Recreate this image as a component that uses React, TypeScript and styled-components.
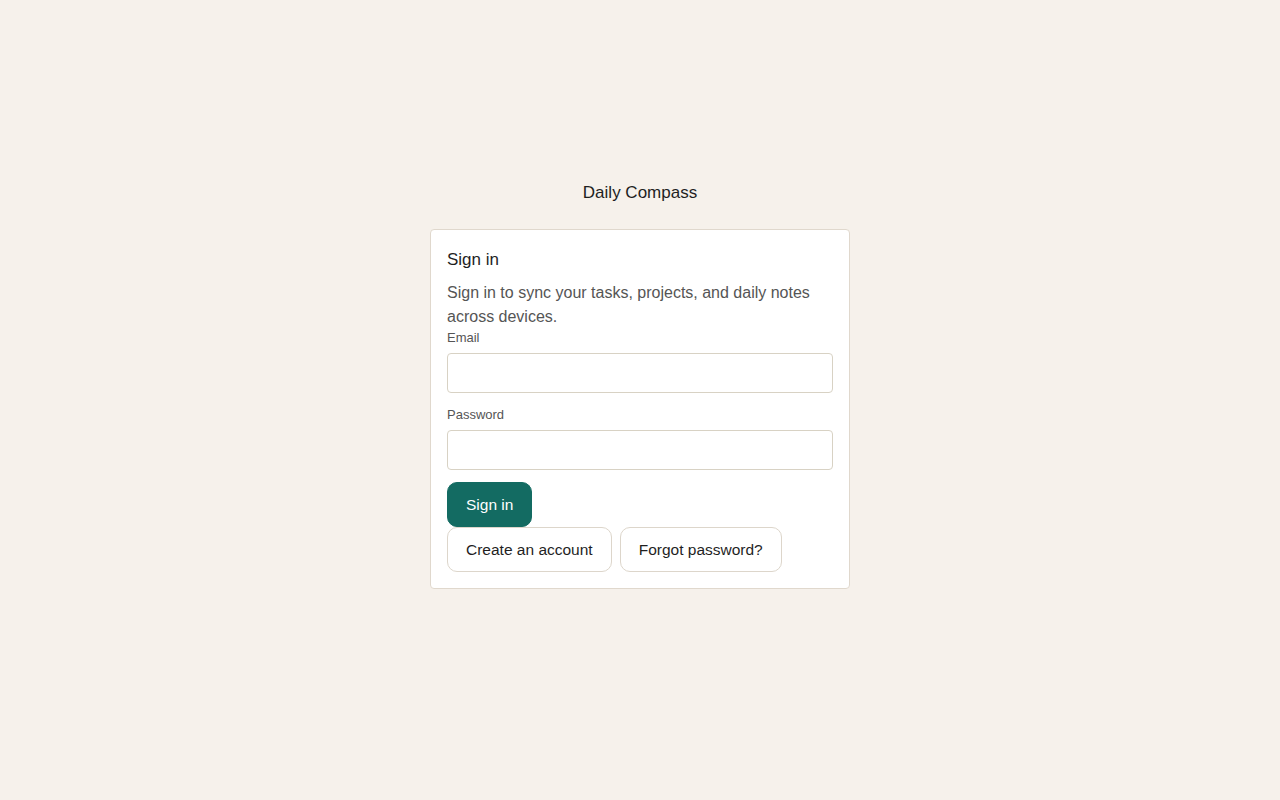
import React from 'react';
import styled, { createGlobalStyle } from 'styled-components';

const GlobalStyle = createGlobalStyle`
	body {
		margin: 0;
		background: #f6f1eb;
		font-family: "Liberation Sans", Arial, sans-serif;
		color: #1f1f1f;
	}
`;

const Page = styled.main`
	min-height: 800px;
	display: flex;
	flex-direction: column;
	align-items: center;
	padding-top: 181px;
	box-sizing: border-box;
`;

const Brand = styled.h1`
	margin: 0 0 24px;
	font-size: 17px;
	font-weight: 400;
	line-height: 24px;
	color: #1f1f1f;
`;

const Card = styled.section`
	width: 420px;
	box-sizing: border-box;
	background: #fff;
	border: 1px solid #e0d8cd;
	border-radius: 4px;
	padding: 16px;
	display: flex;
	flex-direction: column;
`;

const CardTitle = styled.h2`
	margin: 2px 0 9px;
	font-size: 17px;
	font-weight: 400;
	line-height: 24px;
`;

const Description = styled.p`
	margin: 0;
	font-size: 16px;
	line-height: 24px;
	color: #555;
`;

const Label = styled.label`
	display: block;
	font-size: 13px;
	line-height: 16px;
	color: #555;
	padding-top: 1px;
	margin-bottom: 7px;
`;

const Field = styled.div<{ $spaced?: boolean }>`
	margin-top: ${(p) => (p.$spaced ? '13px' : '0')};
`;

const Input = styled.input`
	display: block;
	width: 100%;
	box-sizing: border-box;
	height: 40px;
	border: 1px solid #d8d2c4;
	border-radius: 4px;
	padding: 0 10px;
	font: inherit;
	background: #fff;
`;

const Button = styled.button<{ $primary?: boolean }>`
	height: 45px;
	padding: 0 18px;
	border-radius: 10px;
	font-family: inherit;
	font-size: 15.5px;
	cursor: pointer;
	border: 1px solid ${(p) => (p.$primary ? '#136b62' : '#ddd6cb')};
	background: ${(p) => (p.$primary ? '#136b62' : '#fff')};
	color: ${(p) => (p.$primary ? '#fff' : '#1f1f1f')};
`;

const PrimaryRow = styled.div`
	margin-top: 12px;
	display: flex;
`;

const SecondaryRow = styled.div`
	display: flex;
	gap: 8px;
`;

export default function App() {
	return (
		<>
			<GlobalStyle />
			<Page>
				<Brand>Daily Compass</Brand>
				<Card>
					<CardTitle>Sign in</CardTitle>
					<Description>Sign in to sync your tasks, projects, and daily notes across devices.</Description>
					<Field>
						<Label htmlFor="email">Email</Label>
						<Input id="email" type="email" />
					</Field>
					<Field $spaced>
						<Label htmlFor="password">Password</Label>
						<Input id="password" type="password" />
					</Field>
					<PrimaryRow>
						<Button $primary>Sign in</Button>
					</PrimaryRow>
					<SecondaryRow>
						<Button>Create an account</Button>
						<Button>Forgot password?</Button>
					</SecondaryRow>
				</Card>
			</Page>
		</>
	);
}
